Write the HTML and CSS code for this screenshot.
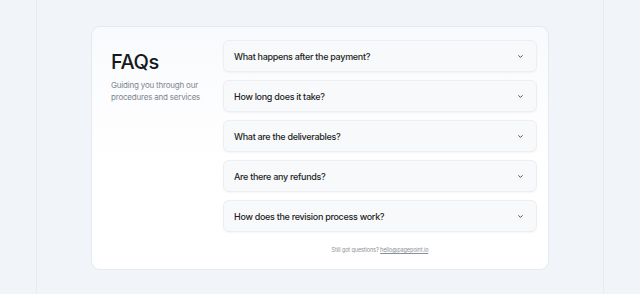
FILE: index.html
```html
<html>
  <head>
    <meta name="viewport" content="width=device-width, initial-scale=1">
    <link rel="stylesheet" href="styles.css">
  </head>
  <body>
    <div class="page">
      <div class="card">
        <div class="intro">
          <h1 class="title">FAQs</h1>
          <p class="lead">Guiding you through our procedures and services</p>
        </div>
        <div class="faq">
          <div class="item"><span>What happens after the payment?</span><svg class="chev" viewBox="0 0 10 10"><path d="M3 4l2 2 2-2"/></svg></div>
          <div class="item"><span>How long does it take?</span><svg class="chev" viewBox="0 0 10 10"><path d="M3 4l2 2 2-2"/></svg></div>
          <div class="item"><span>What are the deliverables?</span><svg class="chev" viewBox="0 0 10 10"><path d="M3 4l2 2 2-2"/></svg></div>
          <div class="item"><span>Are there any refunds?</span><svg class="chev" viewBox="0 0 10 10"><path d="M3 4l2 2 2-2"/></svg></div>
          <div class="item"><span>How does the revision process work?</span><svg class="chev" viewBox="0 0 10 10"><path d="M3 4l2 2 2-2"/></svg></div>
          <p class="more">Still got questions? <a href="#">hello@pagepoint.io</a></p>
        </div>
      </div>
    </div>
  </body>
</html>
```

FILE: styles.css
```css
body {
  margin: 0;
  background: #f1f4f8;
  font-family: Inter, "Noto Sans", sans-serif;
  color: #16181c;
}

.page {
  width: 568px;
  height: 294px;
  margin: 0 auto;
  border-left: 1px solid #e8ecf1;
  border-right: 1px solid #e8ecf1;
  padding-top: 26px;
  box-sizing: border-box;
}

.card {
  width: 458px;
  margin: 0 auto;
  box-sizing: border-box;
  display: flex;
  padding: 13px 11px 16px 19px;
  background: linear-gradient(#f9fafd, #ffffff 60%);
  border: 1px solid #e6e9ee;
  border-radius: 9px;
}

.intro {
  width: 112px;
  flex-shrink: 0;
  padding-top: 9px;
}

.title {
  margin: 0;
  font-size: 20px;
  font-weight: 500;
  letter-spacing: -0.4px;
  line-height: 26px;
}

.lead {
  margin: 4px 0 0;
  font-size: 8px;
  letter-spacing: -0.2px;
  line-height: 12px;
  color: #80858d;
}

.faq {
  flex: 1;
  display: flex;
  flex-direction: column;
  gap: 8px;
}

.item {
  height: 32px;
  box-sizing: border-box;
  display: flex;
  align-items: center;
  justify-content: space-between;
  padding: 0 11px 0 10px;
  background: #f8f9fb;
  border: 1px solid #eceef2;
  border-radius: 6px;
  box-shadow: 0 1px 2px rgba(20, 30, 50, 0.04);
  font-size: 9px;
  letter-spacing: -0.3px;
  font-weight: 500;
  color: #1c1f24;
}

.chev {
  width: 9px;
  height: 9px;
  fill: none;
  stroke: #4a4f57;
  stroke-width: 1.1;
  stroke-linecap: round;
  stroke-linejoin: round;
}

.more {
  margin: 7px 0 0;
  text-align: center;
  font-size: 5.5px;
  letter-spacing: -0.1px;
  color: #8b9098;
}

.more a {
  color: #8b9098;
}
```
